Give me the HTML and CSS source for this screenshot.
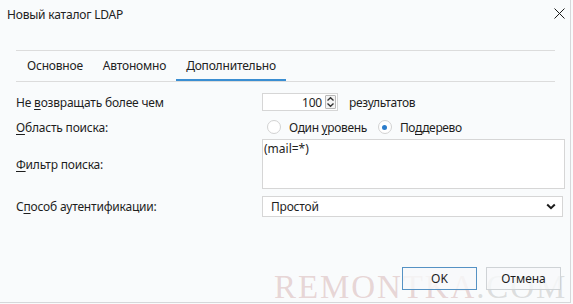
FILE: index.html
```html
<!DOCTYPE html>
<html lang="ru">
<head>
<meta charset="utf-8">
<title>Новый каталог LDAP</title>
<link rel="stylesheet" href="styles.css">
</head>
<body>
<div class="window">
  <div class="titlebar">
    <span class="title">Новый каталог LDAP</span>
    <span class="close"><svg width="11" height="11" viewBox="0 0 11 11"><path d="M0.5 0.5 L10.5 10.5 M10.5 0.5 L0.5 10.5" stroke="#1a1a1a" stroke-width="1" fill="none"/></svg></span>
  </div>
  <div class="tabs">
    <div class="tab">Основное</div>
    <div class="tab">Автономно</div>
    <div class="tab active">Дополнительно</div>
  </div>
  <div class="form">
    <div class="row r1">
      <span class="label">Не <u>в</u>озвращать более чем</span>
      <div class="ctrl">
        <div class="spin">
          <span class="num">100</span>
          <span class="spinbtn"><svg width="9" height="12" viewBox="0 0 9 12"><path d="M1.5 4.5 L4.5 1.8 L7.5 4.5 M1.5 7.5 L4.5 10.2 L7.5 7.5" stroke="#333" stroke-width="1.4" fill="none"/></svg></span>
        </div>
        <span class="suffix">результатов</span>
      </div>
    </div>
    <div class="row r2">
      <span class="label"><u>О</u>бласть поиска:</span>
      <div class="ctrl">
        <span class="radio"></span><span class="rlabel">Один <u>у</u>ровень</span>
        <span class="radio checked"></span><span class="rlabel">По<u>д</u>дерево</span>
      </div>
    </div>
    <div class="row r3">
      <span class="label"><u>Ф</u>ильтр поиска:</span>
      <div class="textarea">(mail=*)</div>
    </div>
    <div class="row r4">
      <span class="label">С<u>п</u>особ аутентификации:</span>
      <div class="select"><span>Простой</span><svg width="10" height="7" viewBox="0 0 10 7"><path d="M1.2 1.5 L5 5.2 L8.8 1.5" stroke="#1a1a1a" stroke-width="2" fill="none"/></svg></div>
    </div>
  </div>
  <div class="buttons">
    <button class="btn default">OK</button>
    <button class="btn">Отмена</button>
  </div>
  <div class="watermark">REMONTKA<span class="dot">.COM</span></div>
</div>
</body>
</html>
```

FILE: styles.css
```css
* { box-sizing: border-box; }
html, body { margin: 0; padding: 0; background: #f9fbfc; }
body { font-family: "Noto Sans", "Open Sans", sans-serif; font-size: 12px; color: #1e1e1e; }
u { text-decoration: underline; text-underline-offset: 2px; text-decoration-thickness: 1px; }

.window {
  position: relative;
  width: 571px;
  height: 303px;
  background: #f9fbfc;
  border-right: 1px solid #d6d8da;
  border-bottom: 1px solid #d6d8da;
  display: flex;
  flex-direction: column;
  overflow: hidden;
}

.titlebar {
  height: 28px;
  display: flex;
  align-items: center;
  justify-content: space-between;
  padding: 0 5px 0 7px;
}
.title { color: #222; letter-spacing: -0.2px; }
.close { display: flex; width: 11px; height: 11px; margin-top: -2px; }

.tabs {
  margin: 22px 15px 0 16px;
  height: 32px;
  border-top: 1px solid #dcdcdc;
  border-bottom: 1px solid #dcdcdc;
  display: flex;
  padding-left: 1px;
}
.tab {
  padding: 0 10px;
  line-height: 30px;
  height: 30px;
  color: #222;
  letter-spacing: -0.2px;
}
.tab.active { box-shadow: inset 0 -2px 0 #3a8ed2; }

.form { padding: 11px 5px 0 16px; display: flex; flex-direction: column; }
.row {
  display: grid;
  grid-template-columns: 246px 1fr;
  align-items: center;
}
.label { letter-spacing: -0.2px; }
.r1 { height: 18px; }
.r2 { height: 18px; margin-top: 7px; }
.r3 { height: 50px; margin-top: 3px; }
.r4 { height: 21px; margin-top: 7px; }

.ctrl { display: flex; align-items: center; }
.spin {
  width: 76px;
  height: 18px;
  border: 1px solid #d6d6d6;
  background: #fff;
  display: flex;
  align-items: center;
  justify-content: flex-end;
  padding-right: 1px;
}
.num { margin-right: 3px; letter-spacing: -0.2px; }
.spinbtn {
  width: 11px;
  height: 14px;
  border: 1px solid #b8b8b8;
  border-radius: 1px;
  display: flex;
  align-items: center;
  justify-content: center;
  background: #f4f4f4;
}
.suffix { margin-left: 11px; letter-spacing: -0.3px; }

.radio {
  width: 14px;
  height: 14px;
  border-radius: 50%;
  border: 1px solid #d2d2d2;
  background: #fff;
  margin-left: 5px;
  flex: none;
  position: relative;
}
.radio.checked::after {
  content: "";
  position: absolute;
  left: 3.5px;
  top: 3.5px;
  width: 5px;
  height: 5px;
  border-radius: 50%;
  background: #2a7ccb;
}
.rlabel { margin-left: 8px; margin-right: 4px; letter-spacing: -0.35px; }
.radio.checked { margin-left: 7px; }

.textarea {
  height: 50px;
  border: 1px solid #d6d6d6;
  background: #fff;
  padding: 1px 1px;
  line-height: 16px;
  align-self: stretch;
}
.select {
  height: 21px;
  margin-right: 2px;
  border: 1px solid #d6d6d6;
  background: #fff;
  display: flex;
  align-items: center;
  justify-content: space-between;
  padding: 0 6px 0 8px;
  letter-spacing: -0.2px;
}

.buttons {
  margin-top: auto;
  padding: 0 9px 12px 0;
  display: flex;
  justify-content: flex-end;
  gap: 9px;
  position: relative;
  z-index: 2;
}
.btn {
  width: 75px;
  height: 23px;
  font-family: inherit;
  font-size: 12px;
  color: #1e1e1e;
  background: rgba(248, 249, 250, 0.8);
  border: 1px solid #cfd3d6;
  padding: 0;
}
.btn.default { border-color: #5592c4; }

.watermark {
  position: absolute;
  left: 274px;
  top: 271px;
  font-family: "Liberation Serif", serif;
  font-size: 33px;
  letter-spacing: 1.9px;
  color: rgba(205, 160, 160, 0.42);
  line-height: 33px;
  white-space: nowrap;
  pointer-events: none;
  z-index: 1;
}
.watermark .dot { color: rgba(180, 180, 180, 0.42); }
```
